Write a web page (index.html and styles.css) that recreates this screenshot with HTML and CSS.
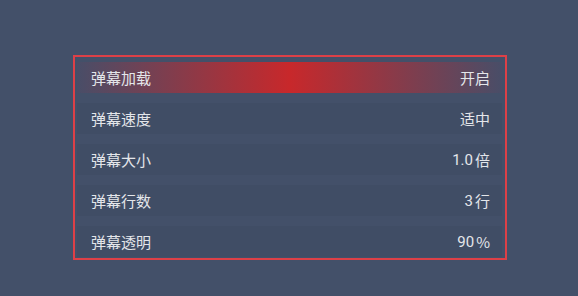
FILE: index.html
```html
<!DOCTYPE html>
<html lang="zh-CN">
<head>
<meta charset="utf-8">
<link rel="stylesheet" href="styles.css">
</head>
<body>
<div class="panel">
  <div class="row focus"><span class="label">弹幕加载</span><span class="value">开启</span></div>
  <div class="row"><span class="label">弹幕速度</span><span class="value">适中</span></div>
  <div class="row"><span class="label">弹幕大小</span><span class="value"><span class="num">1.0</span>倍</span></div>
  <div class="row"><span class="label">弹幕行数</span><span class="value"><span class="num">3</span>行</span></div>
  <div class="row"><span class="label">弹幕透明</span><span class="value"><span class="num">90</span>%</span></div>
</div>
</body>
</html>
```
FILE: styles.css
```css
html, body {
  margin: 0;
  padding: 0;
  width: 578px;
  height: 296px;
  background: #435069;
  overflow: hidden;
}
body {
  font-family: "Noto Sans CJK SC", "Noto Sans", sans-serif;
  color: #e4e6ea;
  padding-top: 55px;
  padding-left: 73px;
  box-sizing: border-box;
}
.panel {
  width: 434px;
  height: 205px;
  box-sizing: border-box;
  border: 2px solid #dd4047;
  padding: 5px 3px 1px 2px;
  display: flex;
  flex-direction: column;
  gap: 10px;
}
.row {
  height: 31px;
  display: flex;
  align-items: center;
  justify-content: space-between;
  padding: 0 12px 0 14px;
  font-size: 15px;
  background: rgba(0, 0, 0, 0.035);
}
.row.focus {
  background: linear-gradient(to right, rgba(90, 70, 100, 0.25) 0%, #c8282b 50%, rgba(90, 70, 100, 0.25) 100%);
}
.value {
  display: flex;
  align-items: center;
}
.num {
  font-family: Roboto, "Noto Sans", sans-serif;
  margin-right: 2px;
}
```
